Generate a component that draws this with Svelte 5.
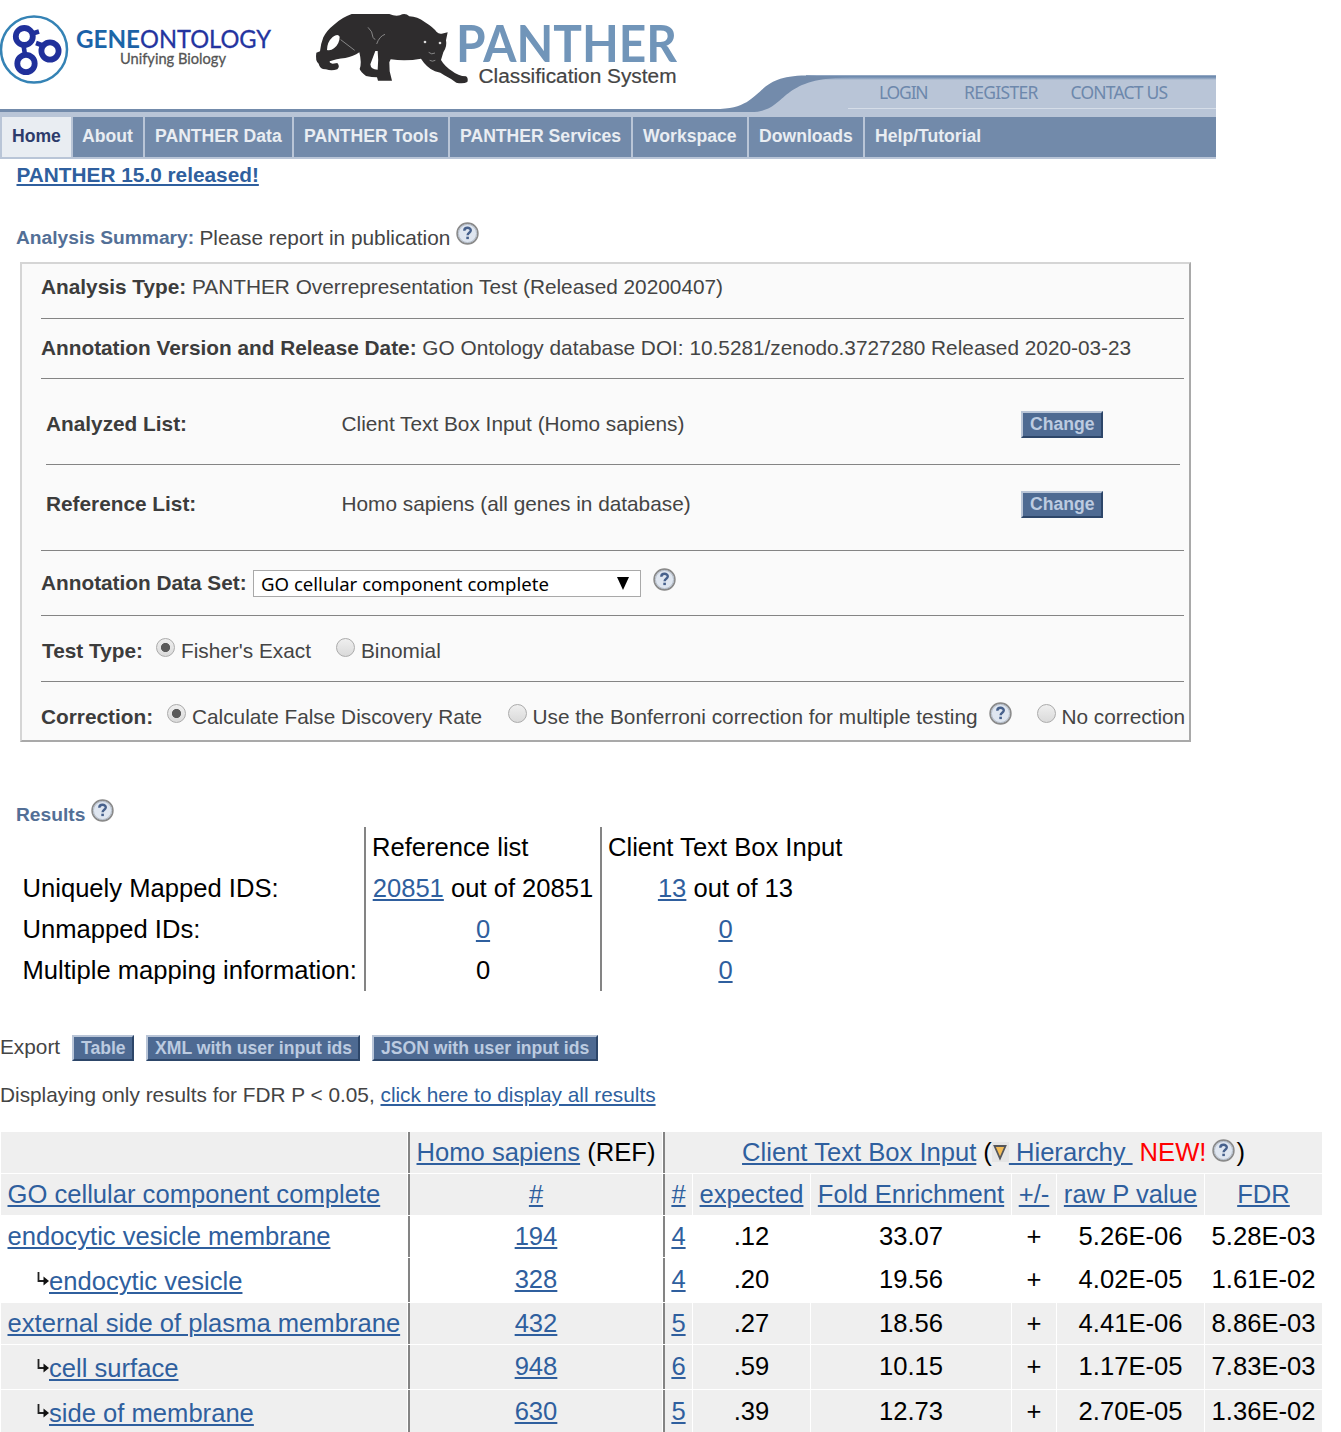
<script>
  const nav = ['Home', 'About', 'PANTHER Data', 'PANTHER Tools', 'PANTHER Services', 'Workspace', 'Downloads', 'Help/Tutorial'];

  const mapping = [
    { label: 'Uniquely Mapped IDS:', ref: '20851', refRest: ' out of 20851', input: '13', inputRest: ' out of 13' },
    { label: 'Unmapped IDs:', ref: '0', refRest: '', input: '0', inputRest: '' },
    { label: 'Multiple mapping information:', ref: '', refRest: '0', input: '0', inputRest: '' }
  ];

  const rows = [
    { name: 'endocytic vesicle membrane', ref: 194, n: 4, exp: '.12', fold: '33.07', p: '5.26E-06', fdr: '5.28E-03', child: false, shade: false },
    { name: 'endocytic vesicle', ref: 328, n: 4, exp: '.20', fold: '19.56', p: '4.02E-05', fdr: '1.61E-02', child: true, shade: false },
    { name: 'external side of plasma membrane', ref: 432, n: 5, exp: '.27', fold: '18.56', p: '4.41E-06', fdr: '8.86E-03', child: false, shade: true },
    { name: 'cell surface', ref: 948, n: 6, exp: '.59', fold: '10.15', p: '1.17E-05', fdr: '7.83E-03', child: true, shade: true },
    { name: 'side of membrane', ref: 630, n: 5, exp: '.39', fold: '12.73', p: '2.70E-05', fdr: '1.36E-02', child: true, shade: true }
  ];
</script>

{#snippet help()}
  <svg class="help" viewBox="0 0 24 24" aria-label="Help">
    <circle cx="11.500" cy="11.500" r="10.4" fill="#dfe6f0" stroke="#8a8a8a" stroke-width="1.6" />
    <circle cx="11.500" cy="11.500" r="9.1" fill="none" stroke="#b4bdc9" stroke-width="1" />
    <path d="M8.3 8.7 C8.3 4.9 14.8 4.9 14.8 8.3 C14.8 10.7 11.6 10.7 11.6 13.2" fill="none" stroke="#47618c" stroke-width="2.4" />
    <rect x="10.3" y="14.7" width="2.6" height="2.4" fill="#47618c" />
  </svg>
{/snippet}

<div class="page">
  <header class="banner">
    <svg class="art" viewBox="0 0 1216 117" width="1216" height="117">
      <defs>
        <linearGradient id="gene" x1="0" x2="1"><stop offset="0" stop-color="#1a5fa8" /><stop offset=".6" stop-color="#1b68a8" /><stop offset="1" stop-color="#1b5fa5" /></linearGradient>
        <linearGradient id="rim" x1="0" x2="0" y1="0" y2="1"><stop offset="0" stop-color="#a3b5cd" /><stop offset=".3" stop-color="#6f8bae" /><stop offset=".55" stop-color="#7e97b8" /><stop offset="1" stop-color="#b9c5d7" /></linearGradient>
      </defs>

      <circle cx="34" cy="49.5" r="33" fill="#fff" stroke="#3583b5" stroke-width="2.5" />
      <g fill="none" stroke="#20309b" stroke-width="5.8">
        <circle cx="24.3" cy="36.5" r="8.5" />
        <circle cx="50" cy="51" r="8.6" />
        <circle cx="26" cy="63.5" r="8.7" />
        <path d="M31 34 L39 31.5 M36 43 L44 46 M23.500 45 L25 55" stroke-width="4.6" />
      </g>
      <g font-family="Lato, sans-serif">
        <text x="76" y="47.5" fill="url(#gene)" font-weight="700" font-size="24.5" textLength="64" lengthAdjust="spacingAndGlyphs">GENE</text>
        <text x="140" y="47.5" fill="#24349f" stroke="#24349f" stroke-width=".3" font-size="24.5" textLength="131" lengthAdjust="spacingAndGlyphs">ONTOLOGY</text>
        <text x="120" y="63.5" fill="#555" stroke="#555" stroke-width=".3" font-size="16" textLength="106" lengthAdjust="spacingAndGlyphs">Unifying Biology</text>
      </g>

      <g transform="translate(300 0) scale(.33333)">
        <path fill="#2e2c2d" d="M155 42 L268 42 Q285 50 300 46 Q315 36 328 49 Q352 50 374 66 Q400 82 410 96 Q417 103 425 101 L443 97 L438 121 Q442 139 430 157 L423 180 Q434 199 456 213 Q474 228 498 229 Q506 235 502 246 Q490 252 469 248 Q451 235 433 226 Q423 217 405 214 Q380 203 363 176 Q320 184 272 178 L268 187 L269 214 L276 242 L234 242 L231 232 L215 231 L198 228 Q182 216 179 207 Q186 190 178 157 Q160 170 136 174 Q108 176 89 184 Q88 190 98 191 L112 189 Q121 199 112 208 Q94 214 78 208 Q60 209 56 191 Q45 182 49 158 L60 154 Q62 132 70 112 Q80 91 102 74 Q126 52 155 42Z" />
        <path fill="#fff" d="M81 150 Q81 126 98 111 Q114 99 119 110 Q119 131 102 145 Q92 153 81 150Z M226 153 L233 153 Q236 178 233 209 Q212 209 211 193Z" />
        <path fill="none" stroke="#999" stroke-width="2.500" d="M122 119 L164 151 M204 82 Q218 94 219 112 Q221 117 226 118 M255 103 Q238 109 230 132" />
        <path fill="none" stroke="#999" stroke-width="2.500" d="M386 157 Q395 165 405 159 M389 181 Q397 186 406 181" />
        <circle cx="375" cy="126" r="4" fill="#ddd" /><circle cx="420" cy="129" r="4" fill="#ddd" />
      </g>
      <text x="456" y="61.700" fill="#7195b9" font-family="Lato, sans-serif" font-weight="700" font-size="51" textLength="221" lengthAdjust="spacingAndGlyphs">PANTHER</text>
      <text x="478.500" y="82.500" fill="#444" stroke="#444" stroke-width=".2" font-family="Liberation Sans, Arial, sans-serif" font-size="20" textLength="198" lengthAdjust="spacingAndGlyphs">Classification System</text>

      <path fill="#b9c5d7" d="M0 111 H745 C785 108 780 78 835 76 H1216 V117 H0Z" />
      <rect x="806" y="75" width="410" height="5" fill="url(#rim)" />
      <path fill="#738bab" d="M0 109 H715 C767 109 750 75.500 806 75.500 L850 77.500 C774 77.500 790 112 750 112 H0Z" />
      <rect x="848" y="108" width="368" height="1" fill="#d5dde8" />
    </svg>
    <div class="account"><span>LOGIN</span><span>REGISTER</span><span>CONTACT US</span></div>
  </header>

  <nav>
    {#each nav as item, i}
      <div class="tab" class:current={i === 0}>{item}</div>
    {/each}
  </nav>

  <div class="news"><a>PANTHER 15.0 released!</a></div>
  <div class="summary"><b>Analysis Summary:</b><span>Please report in publication</span>{@render help()}</div>

  <section class="panel">
    <div class="row type"><p><b>Analysis Type:</b> PANTHER Overrepresentation Test (Released 20200407)</p></div>
    <div class="row version"><p><b>Annotation Version and Release Date:</b> GO Ontology database DOI: 10.5281/zenodo.3727280 Released 2020-03-23</p></div>
    <div class="row list first"><b>Analyzed List:</b><span>Client Text Box Input (Homo sapiens)</span><button>Change</button></div>
    <div class="row list"><b>Reference List:</b><span>Homo sapiens (all genes in database)</span><button>Change</button></div>
    <div class="row dataset">
      <b>Annotation Data Set:</b>
      <div class="select"><span>GO cellular component complete</span><svg width="12" height="13" viewBox="0 0 12 13"><path d="M0 0H12L6 13Z" /></svg></div>
      {@render help()}
    </div>
    <div class="row test"><b>Test Type:</b><i class="radio on"></i><span>Fisher's Exact</span><i class="radio"></i><span>Binomial</span></div>
    <div class="row correction">
      <b>Correction:</b><i class="radio on"></i><span>Calculate False Discovery Rate</span>
      <i class="radio"></i><span>Use the Bonferroni correction for multiple testing</span>{@render help()}
      <i class="radio"></i><span>No correction</span>
    </div>
  </section>

  <div class="results-title"><b>Results</b>{@render help()}</div>

  <div class="mapping">
    <div></div><div>Reference list</div><div>Client Text Box Input</div>
    {#each mapping as m}
      <div>{m.label}</div>
      <div class="mid">{#if m.ref}<a>{m.ref}</a>{/if}{m.refRest}</div>
      <div class="mid"><a>{m.input}</a>{m.inputRest}</div>
    {/each}
  </div>

  <div class="export"><span>Export</span><button>Table</button><button>XML with user input ids</button><button>JSON with user input ids</button></div>
  <div class="note">Displaying only results for FDR P &lt; 0.05, <a>click here to display all results</a></div>

  <div class="table">
    <div class="line shade top">
      <div></div>
      <div class="bar"><span><a>Homo sapiens</a> (REF)</span></div>
      <div class="bar wide">
        <a>Client Text Box Input</a><span class="paren">(</span><svg class="sort" viewBox="0 0 17 20"><rect width="17" height="20" fill="#e5e5e5" /><path d="M2.500 4H13.500L8 16.500Z" fill="#f4bd57" stroke="#55565a" stroke-width="1.800" /></svg><a>&nbsp;Hierarchy&nbsp;</a><span class="new">NEW!</span>{@render help()}<span>)</span>
      </div>
    </div>
    <div class="line shade">
      <div class="name"><a>GO cellular component complete</a></div>
      <div class="bar"><a>#</a></div><div class="bar"><a>#</a></div><div><a>expected</a></div><div><a>Fold Enrichment</a></div><div><a>+/-</a></div><div><a>raw P value</a></div><div><a>FDR</a></div>
    </div>
    {#each rows as r}
      <div class="line" class:shade={r.shade} class:child={r.child}>
        <div class="name">
          {#if r.child}<svg class="branch" width="13" height="14" viewBox="0 0 13 14"><path d="M2.500 0V9H8" fill="none" stroke="#222" stroke-width="1.800" /><path d="M7.500 4.500L13 9L7.500 13.500Z" fill="#111" /></svg>{/if}<a>{r.name}</a>
        </div>
        <div class="bar"><a>{r.ref}</a></div>
        <div class="bar"><a>{r.n}</a></div>
        <div>{r.exp}</div><div>{r.fold}</div><div>+</div><div>{r.p}</div><div>{r.fdr}</div>
      </div>
    {/each}
  </div>
</div>

<style>
  :global(body) { background: #fff; overflow: hidden; }
  .page { width: 1341px; height: 1432px; overflow: hidden; box-sizing: border-box; font-family: "Liberation Sans", Arial, sans-serif; font-size: 20.8px; line-height: 24px; color: #444; white-space: nowrap; }
  .page * { box-sizing: border-box; }
  a { color: #2f5f9e; text-decoration: underline; text-decoration-thickness: 2px; text-underline-offset: 2px; }
  p { margin: 0; }
  svg { display: block; flex: none; }
  .help { width: 24px; height: 24px; }

  .banner { display: grid; width: 1216px; height: 117px; }
  .art, .account { grid-area: 1 / 1; }
  .account { display: flex; padding: 80px 0 0 879px; font-family: "Noto Sans", sans-serif; font-size: 17.5px; letter-spacing: -0.8px; color: #6d88ac; }
  .account span:nth-child(1) { width: 85px; letter-spacing: -1.200px; }
  .account span:nth-child(2) { width: 106.500px; letter-spacing: -0.700px; }

  nav { display: grid; grid-template-columns: 69px 70px 147px 154px 181px 114px 114px 351px; gap: 2px; width: 1216px; height: 42px; padding: 0 0 2px 2px; background: #b9c5d7; }
  .tab { padding: 7px 0 0 10px; background: #728aaa; color: #e9edf2; font-weight: 700; font-size: 17.600px; }
  .tab:nth-child(2) { padding-left: 9px; }
  .tab.current { background: #e9edf2; color: #2d3b6b; }

  .news { height: 62px; padding: 4px 0 0 16.500px; font-weight: 700; }
  .summary { display: flex; height: 41px; padding: 5px 0 0 16px; }
  .summary b { width: 183.500px; color: #536f96; font-size: 19.200px; }
  .summary span { width: 256.500px; }
  .summary .help { margin-top: -4px; }

  .panel { width: 1171px; height: 480px; margin-left: 20px; padding: 0 5px 0 19px; border: 2px solid; border-color: #d5d5d5 #a9a9a9 #a9a9a9 #d5d5d5; background: #fafafa; }
  .row { display: grid; align-items: start; justify-content: start; border-bottom: 1px solid #848484; }
  .panel b { color: #3c3c3c; }
  .type { height: 55px; padding-top: 11px; }
  .version { height: 60px; padding-top: 17px; }
  .list { grid-template-columns: 295.500px 679.500px 82px; height: 86px; padding-top: 27px; }
  .list.first { margin: 0 4px 0 5px; padding-top: 33px; }
  .list:not(.first) { padding-left: 5px; }
  .list button { margin-top: -1px; }
  .dataset { grid-template-columns: 212px 399.500px 24px; height: 65px; padding-top: 20px; }
  .dataset .help { margin-top: -3px; }
  .select { display: flex; justify-content: space-between; width: 388px; height: 27px; margin-top: -1px; padding: 1px 11px 0 7px; border: 1px solid #a9a9a9; background: #fff; color: #000; font-family: "Noto Sans", sans-serif; font-size: 18.600px; }
  .select svg { margin-top: 5px; }
  .radio { width: 19px; height: 19px; margin-top: -1px; border: 1px solid #ababab; border-radius: 50%; background: linear-gradient(#efefef, #dadada); }
  .radio.on { background: radial-gradient(circle, #5b5b5b 0 4.200px, transparent 5px), linear-gradient(#efefef, #dadada); }
  .test { grid-template-columns: 114px 25px 155px 25px auto; height: 66px; padding: 23px 0 0 1px; }
  .correction { grid-template-columns: 126px 25px 315.500px 25px 456px 48px 25px auto; height: 58px; padding-top: 23px; border: 0; }
  .correction .help { margin-top: -3px; }

  button { height: 27px; padding: 0 7px 2px; border: 2px solid; border-color: #b9c5d7 #2d4669 #2d4669 #b9c5d7; border-radius: 0; background: #4e6a92; color: #bccbe0; font: 700 17.600px/20px "Liberation Sans", Arial, sans-serif; white-space: nowrap; }

  .results-title { display: flex; height: 85px; padding: 61px 0 0 16px; color: #536f96; font-size: 19.200px; }
  .results-title b { width: 75px; }
  .results-title .help { margin-top: -4px; }

  .mapping { display: grid; grid-template-columns: 364px 236px 249px; grid-auto-rows: 41px; color: #000; font-size: 25.600px; line-height: 40px; }
  .mapping div:nth-child(3n + 1) { padding-left: 22.500px; }
  .mapping div:not(:nth-child(3n + 1)) { padding-left: 6px; border-left: 2px solid #848484; }
  .mapping .mid.mid { padding: 0; text-align: center; }

  .export { display: flex; height: 70px; padding-top: 44px; }
  .export span { width: 72px; }
  .export button { margin-right: 12px; height: 26px; padding-bottom: 0; }
  .export button:nth-of-type(1) { width: 62px; }
  .export button:nth-of-type(2) { width: 214px; }
  .export button:nth-of-type(3) { width: 226px; }
  .note { height: 71px; padding-top: 22px; }

  .table { width: 1322px; padding-left: 1px; color: #000; font-size: 25.600px; line-height: 40px; }
  .line { display: grid; grid-template-columns: 406px 254px 29px 117px 200px 44px 147px 117px; gap: 1px; height: 41px; margin-bottom: 1px; }
  .line > div { display: flex; justify-content: center; }
  .line.child { height: 44px; line-height: 42px; }
  .line.shade > div { background: #efefef; }
  .line > div.name { justify-content: flex-start; padding-left: 6.500px; }
  .line.child > div.name { padding: 2px 0 0 35px; }
  .line > .bar { border-left: 2px solid #848484; }
  .branch { margin-top: 12px; }
  .top { grid-template-columns: 406px 254px 659px; }
  .paren { margin-left: 7px; }
  .sort { width: 17px; height: 20px; margin-top: 10px; }
  .new { margin: 0 6px 0 7px; color: #f00; }
  .top .help { margin-top: 7px; }
</style>
